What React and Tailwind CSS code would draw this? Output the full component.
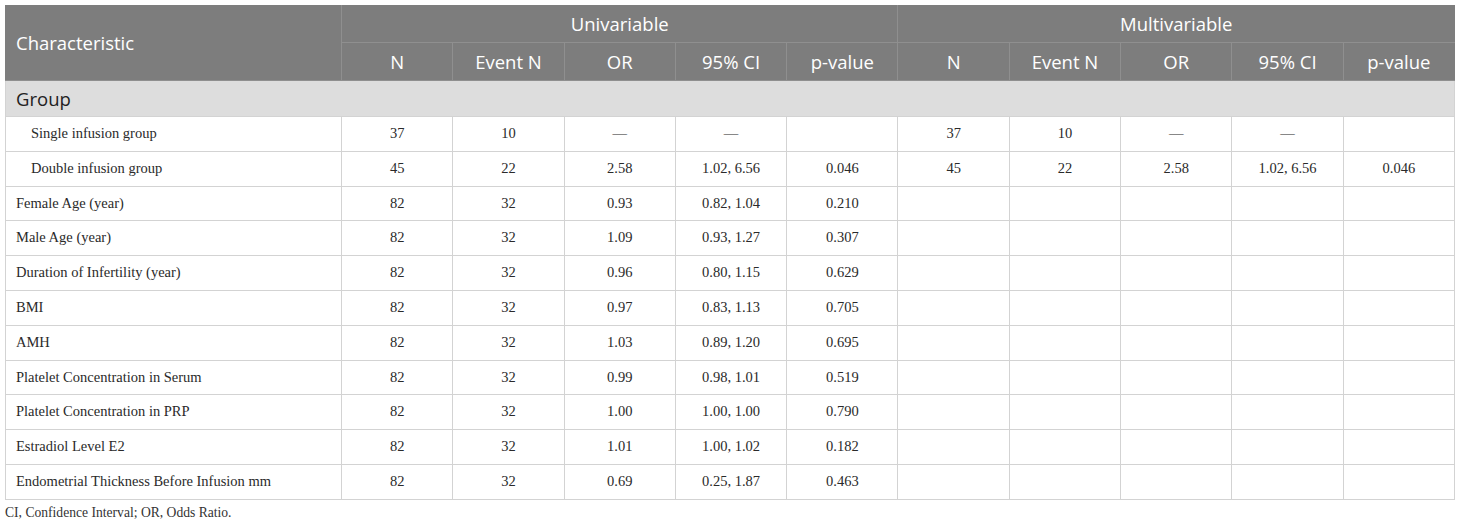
const rows = [
  { label: "Single infusion group", indent: true, uni: ["37", "10", "—", "—", ""], multi: ["37", "10", "—", "—", ""] },
  { label: "Double infusion group", indent: true, uni: ["45", "22", "2.58", "1.02, 6.56", "0.046"], multi: ["45", "22", "2.58", "1.02, 6.56", "0.046"] },
  { label: "Female Age (year)", uni: ["82", "32", "0.93", "0.82, 1.04", "0.210"] },
  { label: "Male Age (year)", uni: ["82", "32", "1.09", "0.93, 1.27", "0.307"] },
  { label: "Duration of Infertility (year)", uni: ["82", "32", "0.96", "0.80, 1.15", "0.629"] },
  { label: "BMI", uni: ["82", "32", "0.97", "0.83, 1.13", "0.705"] },
  { label: "AMH", uni: ["82", "32", "1.03", "0.89, 1.20", "0.695"] },
  { label: "Platelet Concentration in Serum", uni: ["82", "32", "0.99", "0.98, 1.01", "0.519"] },
  { label: "Platelet Concentration in PRP", uni: ["82", "32", "1.00", "1.00, 1.00", "0.790"] },
  { label: "Estradiol Level E2", uni: ["82", "32", "1.01", "1.00, 1.02", "0.182"] },
  { label: "Endometrial Thickness Before Infusion mm", uni: ["82", "32", "0.69", "0.25, 1.87", "0.463"] },
];

const subHeads = ["N", "Event N", "OR", "95% CI", "p-value"];

function App() {
  const cells = (vals) =>
    (vals || ["", "", "", "", ""]).map((v, i) => (
      <td key={i} className="border border-[#d3d3d3] text-center h-[34.8px] p-0">
        {v}
      </td>
    ));

  return (
    <div className="bg-white w-[1460px] h-[525px] px-[5px] pt-[5px]">
      <table className="table-fixed border-collapse w-[1450px] text-[14.5px] text-[#2a2a2a] font-['Liberation_Serif',serif]">
        <colgroup>
          <col className="w-[336px]" />
          {Array.from({ length: 10 }).map((_, i) => (
            <col key={i} />
          ))}
        </colgroup>
        <thead className="bg-[#7d7d7d] text-white text-[18.5px] font-['Open_Sans',sans-serif]">
          <tr className="h-[37px]">
            <th rowSpan={2} className="text-left font-normal pl-[10px] border border-[#8f8f8f] border-l-[#7d7d7d] border-t-[#7d7d7d]">
              Characteristic
            </th>
            <th colSpan={5} className="font-normal border border-[#8f8f8f] border-t-[#7d7d7d]">
              Univariable
            </th>
            <th colSpan={5} className="font-normal border border-[#8f8f8f] border-t-[#7d7d7d] border-r-[#7d7d7d]">
              Multivariable
            </th>
          </tr>
          <tr className="h-[38px]">
            {[...subHeads, ...subHeads].map((h, i) => (
              <th
                key={i}
                className={`font-normal border border-[#8f8f8f] ${i === 9 ? "border-r-[#7d7d7d]" : ""}`}
              >
                {h}
              </th>
            ))}
          </tr>
        </thead>
        <tbody>
          <tr className="h-[36px] bg-[#dddddd]">
            <td colSpan={11} className="pl-[10px] text-[18.5px] font-['Open_Sans',sans-serif] text-[#222] border border-[#d3d3d3] border-t-[#c8c8c8]">
              Group
            </td>
          </tr>
          {rows.map((r) => (
            <tr key={r.label}>
              <td className={`border border-[#d3d3d3] h-[34.8px] ${r.indent ? "pl-[25px]" : "pl-[10px]"}`}>
                {r.label}
              </td>
              {cells(r.uni)}
              {cells(r.multi)}
            </tr>
          ))}
        </tbody>
      </table>
      <p className="mt-[3px] text-[13.6px] text-[#333] font-['Liberation_Serif',serif]">
        CI, Confidence Interval; OR, Odds Ratio.
      </p>
    </div>
  );
}

export default App;
